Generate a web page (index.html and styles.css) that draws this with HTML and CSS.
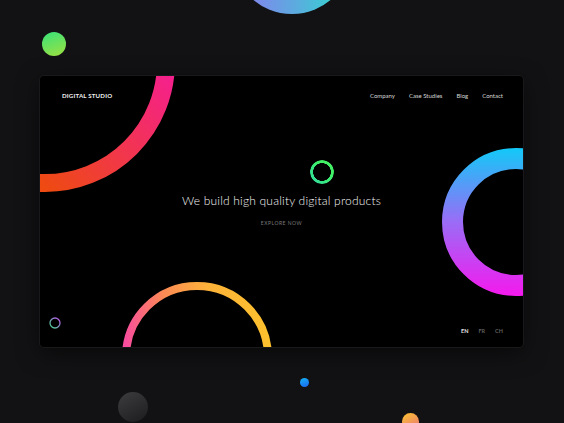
FILE: index.html
```html
<!DOCTYPE html>
<html>
<head>
<meta charset="utf-8">
<link rel="stylesheet" href="styles.css">
</head>
<body>
<div class="page">
  <span class="deco deco-top"></span>
  <span class="deco deco-green"></span>
  <span class="deco deco-gray"></span>
  <span class="deco deco-blue"></span>
  <span class="deco deco-yellow"></span>

  <main class="card">
    <svg class="rings" viewBox="0 0 483 271" width="483" height="271" aria-hidden="true">
      <defs>
        <linearGradient id="gRed" gradientUnits="userSpaceOnUse" x1="130" y1="0" x2="10" y2="116">
          <stop offset="0" stop-color="#f5208c"/>
          <stop offset="1" stop-color="#ee4a12"/>
        </linearGradient>
        <linearGradient id="gBlue" gradientUnits="userSpaceOnUse" x1="0" y1="72" x2="0" y2="220">
          <stop offset="0" stop-color="#12c9f8"/>
          <stop offset="0.5" stop-color="#9a6cf6"/>
          <stop offset="1" stop-color="#f519ee"/>
        </linearGradient>
        <linearGradient id="gYellow" gradientUnits="userSpaceOnUse" x1="84" y1="260" x2="232" y2="240">
          <stop offset="0" stop-color="#f84c9e"/>
          <stop offset="0.3" stop-color="#fc8a55"/>
          <stop offset="0.6" stop-color="#fdb23a"/>
          <stop offset="1" stop-color="#fdc22c"/>
        </linearGradient>
        <linearGradient id="gSmall" gradientUnits="userSpaceOnUse" x1="20" y1="242" x2="10" y2="252">
          <stop offset="0" stop-color="#c04cf0"/>
          <stop offset="1" stop-color="#3fd98a"/>
        </linearGradient>
      </defs>
      <circle cx="5" cy="-14" r="121" fill="none" stroke="url(#gRed)" stroke-width="18"/>
      <circle cx="476" cy="146" r="63.5" fill="none" stroke="url(#gBlue)" stroke-width="21"/>
      <circle cx="157" cy="281" r="71" fill="none" stroke="url(#gYellow)" stroke-width="8"/>
      <circle cx="15" cy="247" r="5" fill="none" stroke="url(#gSmall)" stroke-width="1.3"/>
    </svg>

    <header class="top">
      <div class="logo">DIGITAL STUDIO</div>
      <nav class="nav">
        <a>Company</a>
        <a>Case Studies</a>
        <a>Blog</a>
        <a>Contact</a>
      </nav>
    </header>

    <section class="hero">
      <span class="hero-ring"></span>
      <h1 class="headline">We build high quality digital products</h1>
      <a class="explore">EXPLORE NOW</a>
    </section>

    <footer class="langs">
      <span class="lang active">EN</span>
      <span class="lang">FR</span>
      <span class="lang">CH</span>
    </footer>
  </main>
</div>
</body>
</html>
```

FILE: styles.css
```css
* { box-sizing: border-box; }
html, body { margin: 0; padding: 0; }
body {
  background: #121214;
  width: 564px;
  height: 423px;
  overflow: hidden;
  font-family: "Lato", "Noto Sans", sans-serif;
}
.page {
  position: relative;
  width: 564px;
  height: 423px;
  padding: 76px 41px 0 40px;
}
.deco {
  position: absolute;
  border-radius: 50%;
  display: block;
}
.deco-top {
  left: 232px; top: -106px;
  width: 120px; height: 120px;
  background: linear-gradient(90deg, #8f78f2 0%, #5fa8e0 50%, #28e0cc 100%);
}
.deco-green {
  left: 42px; top: 32px;
  width: 24px; height: 24px;
  background: linear-gradient(160deg, #38e27a 0%, #9ee040 100%);
}
.deco-gray {
  left: 118px; top: 392px;
  width: 30px; height: 30px;
  background: linear-gradient(150deg, #3d3d40 0%, #1c1c1e 100%);
}
.deco-blue {
  left: 300px; top: 378px;
  width: 9px; height: 9px;
  background: linear-gradient(160deg, #16b4f5 0%, #1a64f0 100%);
}
.deco-yellow {
  left: 402px; top: 413px;
  width: 17px; height: 17px;
  background: linear-gradient(150deg, #fcc52e 0%, #e9707a 100%);
}

.card {
  position: relative;
  width: 483px;
  height: 271px;
  background: #000;
  border-radius: 4px;
  overflow: hidden;
  display: flex;
  flex-direction: column;
  box-shadow: 0 0 0 1px #19191b, 0 6px 22px rgba(0,0,0,0.55);
}
.rings {
  position: absolute;
  left: 0; top: 0;
}
.top {
  position: relative;
  display: flex;
  justify-content: space-between;
  align-items: center;
  padding: 0 20px 0 22px;
  height: 39px;
}
.logo {
  color: #f2f2f2;
  font-weight: 700;
  font-size: 6.1px;
  letter-spacing: 0.2px;
}
.nav {
  display: flex;
  gap: 14px;
}
.nav a {
  color: #d6d6d6;
  font-size: 6px;
}
.hero {
  position: relative;
  flex: 1;
  display: flex;
  flex-direction: column;
  align-items: center;
  padding-top: 45px;
}
.hero-ring {
  width: 24px;
  height: 24px;
  border-radius: 50%;
  margin-left: 81px;
  background: linear-gradient(45deg, #2fd8a6 0%, #3ef06a 60%, #4af060 100%);
  -webkit-mask: radial-gradient(circle, transparent 8.7px, #000 9px);
  mask: radial-gradient(circle, transparent 8.7px, #000 9px);
}
.headline {
  margin: 9px 0 0 0;
  color: #f6f6f6;
  font-weight: 300;
  font-size: 12px;
  letter-spacing: 0.2px;
  line-height: 15px;
}
.explore {
  margin-top: 12px;
  color: #7a7a7a;
  font-size: 5px;
  letter-spacing: 0.5px;
}
.langs {
  position: relative;
  display: flex;
  justify-content: flex-end;
  gap: 10px;
  padding: 0 20px 13px 0;
}
.lang {
  color: #5f5f5f;
  font-size: 5.5px;
  font-weight: 700;
}
.lang.active { color: #e6e6e6; }
```
